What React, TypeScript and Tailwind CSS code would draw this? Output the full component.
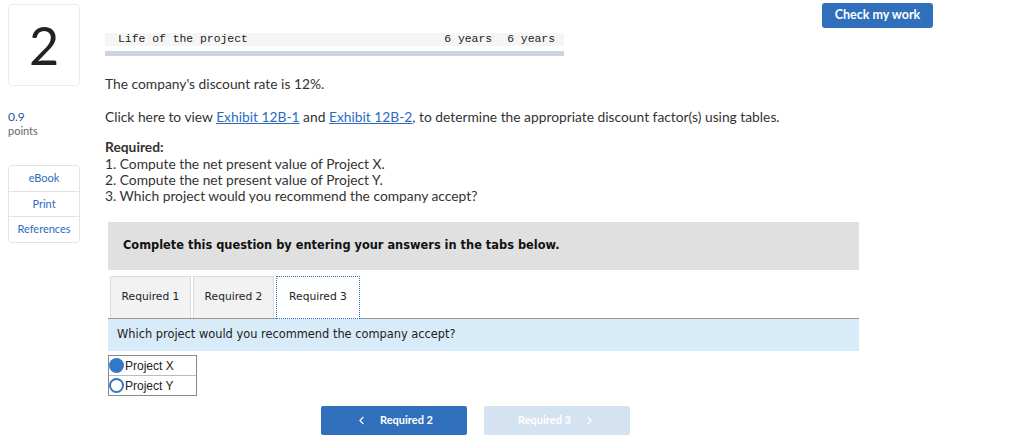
import { ChevronLeft, ChevronRight } from "lucide-react";

const body = "font-['Lato','Liberation_Sans',sans-serif]";
const verdana = "font-['DejaVu_Sans','Liberation_Sans',sans-serif]";

function Sidebar() {
  return (
    <div className="flex w-[80px] shrink-0 flex-col pt-[4px] pl-[8px]">
      <div className="flex h-[82px] w-[72px] items-center justify-center rounded-[4px] border border-[#ececec] bg-white">
        <span className={`${body} text-[52px] leading-none text-[#222]`}>2</span>
      </div>
      <div className={`${body} mt-[24px] text-[12px] leading-[14px] text-[#1f56a5]`}>0.9</div>
      <div className={`${body} text-[11px] leading-[13px] text-[#666]`}>points</div>
      <div className={`${body} mt-[28px] flex flex-col rounded-[4px] border border-[#e3e3e3] text-[11px] text-[#2c6cc0]`}>
        <div className="flex h-[26px] items-center justify-center border-b border-[#e3e3e3]">eBook</div>
        <div className="flex h-[25px] items-center justify-center border-b border-[#e3e3e3]">Print</div>
        <div className="flex h-[25px] items-center justify-center">References</div>
      </div>
    </div>
  );
}

function Tab({ label, width, active }: { label: string; width: string; active?: boolean }) {
  return (
    <div
      className={`flex items-center justify-center text-[10.7px] text-[#222] ${width} ${
        active
          ? "-mb-px h-[43px] border border-dotted border-[#2c6cc0] bg-white"
          : "h-[42px] border border-b-0 border-[#dcdcdc] bg-[#f2f2f2]"
      }`}
    >
      {label}
    </div>
  );
}

export default function App() {
  return (
    <div className="relative flex h-[448px] w-[1024px] bg-white">
      <button className={`${body} absolute right-[91px] top-[3px] h-[25px] w-[111px] rounded-[3px] bg-[#2f6fbb] text-[12.5px] font-bold text-white`}>
        Check my work
      </button>
      <Sidebar />
      <div className="flex w-[779px] flex-col pl-[25px] pt-[33px]">
        <div className="flex w-[459px] flex-col">
          <div className="flex h-[13px] items-center whitespace-nowrap bg-[#f5f5f5] pl-[13px] pr-[9px] font-['Liberation_Mono',monospace] text-[11.4px] text-[#222]">
            <span className="flex-1">Life of the project</span>
            <span className="shrink-0">6 years</span>
            <span className="ml-[15px] shrink-0">6 years</span>
          </div>
          <div className="mt-[5px] h-[5px] bg-[#ccd4e2]" />
        </div>
        <div className={`${body} text-[13.8px] leading-[16px] text-[#333]`}>
          <p className="mt-[20px]">The company's discount rate is 12%.</p>
          <p className="mt-[17px]">
            Click here to view{" "}
            <span className="text-[#2c6cc0] underline">Exhibit 12B-1</span> and{" "}
            <span className="text-[#2c6cc0] underline">Exhibit 12B-2</span>, to determine the appropriate discount factor(s) using tables.
          </p>
          <p className="mt-[14px] font-bold">Required:</p>
          <p className="mt-px">1. Compute the net present value of Project X.</p>
          <p>2. Compute the net present value of Project Y.</p>
          <p>3. Which project would you recommend the company accept?</p>
        </div>
        <div className={`${verdana} ml-[3px] mt-[18px] flex h-[48px] items-center bg-[#e0e0e0] pl-[15px] text-[11.4px] font-bold text-[#111]`}>
          Complete this question by entering your answers in the tabs below.
        </div>
        <div className={`${verdana} ml-[3px] mt-[6px] flex flex-col`}>
          <div className="flex gap-[2px] border-b border-[#999] pl-[2px]">
            <Tab label="Required 1" width="w-[81px]" />
            <Tab label="Required 2" width="w-[81px]" />
            <Tab label="Required 3" width="w-[84px]" active />
          </div>
          <div className="flex h-[32px] items-center bg-[#d8ebf9] pl-[9px] text-[11.4px] text-[#222]">
            Which project would you recommend the company accept?
          </div>
        </div>
        <div className="ml-[3px] mt-[4px] flex w-[89px] flex-col border border-[#888] font-['Liberation_Sans',sans-serif] text-[12px] text-[#222]">
          <div className="flex h-[20px] items-center gap-[1px] border-b border-[#bbb]">
            <span className="h-[15px] w-[15px] rounded-full bg-[#3477c8]" />
            Project X
          </div>
          <div className="flex h-[19px] items-center gap-[1px]">
            <span className="h-[15px] w-[15px] rounded-full border-2 border-[#3477c8] bg-white" />
            Project Y
          </div>
        </div>
        <div className={`${body} ml-[216px] mt-[10px] flex gap-[17px] text-[11px] font-bold text-white`}>
          <div className="flex h-[29px] w-[146px] items-center justify-center gap-[12px] rounded-[2px] bg-[#2f6fbb]">
            <ChevronLeft size={13} strokeWidth={2} />
            Required 2
          </div>
          <div className="flex h-[29px] w-[146px] items-center justify-center gap-[12px] rounded-[2px] bg-[#d5e2f1]">
            Required 3
            <ChevronRight size={13} strokeWidth={2} />
          </div>
        </div>
      </div>
    </div>
  );
}
